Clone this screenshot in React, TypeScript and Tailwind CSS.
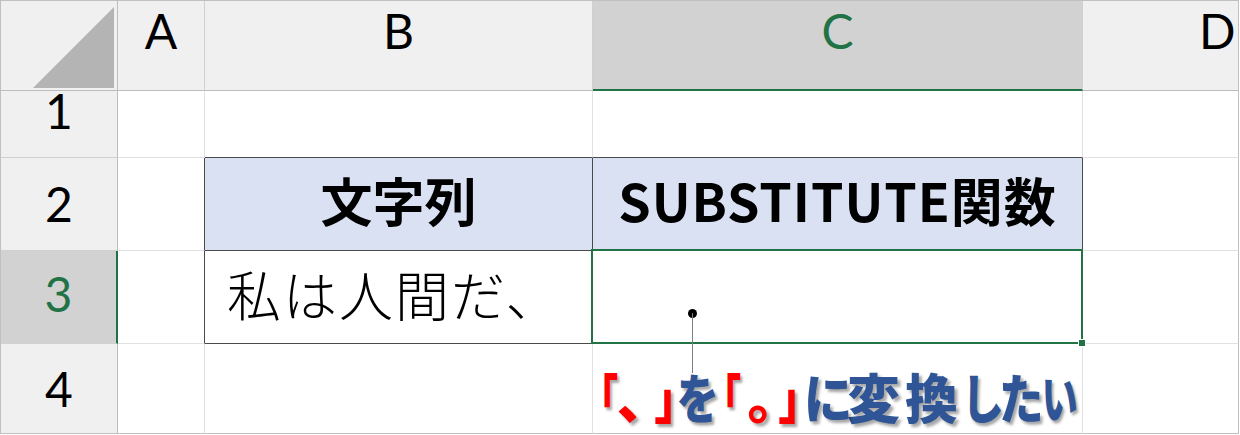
import React from "react";

const HDR_FONT = { fontFamily: 'Lato, "Noto Sans", sans-serif' };
const JP = { fontFamily: '"Noto Sans CJK JP", "Noto Sans", sans-serif' };

function ColHead({ label, selected }: { label: string; selected?: boolean }) {
  return (
    <div
      className={
        "flex justify-center items-start pt-[1px] border-r border-b border-r-[#d0d0d0] text-[48px] leading-[58px] " +
        (selected
          ? "bg-[#d2d2d2] text-[#217346] border-b-2 border-b-[#217346]"
          : "bg-[#f0f0f0] text-black border-b-[#bdbdbd]")
      }
      style={HDR_FONT}
    >
      {label}
    </div>
  );
}

function RowHead({ label, selected, pb, last }: { label: string; selected?: boolean; pb: string; last?: boolean }) {
  return (
    <div
      className={
        "flex justify-center items-end border-b text-[48px] leading-[58px] " +
        pb +
        " " +
        (last ? "border-b-[#c0c0c0] " : "border-b-[#d0d0d0] ") +
        (selected
          ? "bg-[#d2d2d2] text-[#217346] border-r-2 border-r-[#217346]"
          : "bg-[#f0f0f0] text-black border-r border-r-[#bdbdbd]")
      }
      style={HDR_FONT}
    >
      {label}
    </div>
  );
}

export default function App() {
  const cell = "border-r border-b border-r-[#e1e1e1] border-b-[#e1e1e1] bg-white";
  const cellD = "border-r border-b border-r-[#c0c0c0] border-b-[#e1e1e1] bg-white";
  const cell4 = "border-r border-b border-r-[#e1e1e1] border-b-[#c0c0c0] bg-white";
  const red = "inline-block origin-left text-[#ff0000]";
  const blue = "inline-block origin-left text-[#2f5597]";
  return (
    <div className="w-[1240px] h-[435px] bg-white overflow-hidden">
      <div className="relative w-[1239px]">
        <div className="grid grid-cols-[117px_87px_388px_490px_156px] grid-rows-[90px_67px_93px_93px_90px] border-l border-t border-[#c0c0c0]">
          {/* header row */}
          <div className="flex items-end justify-end pr-[3px] pb-[2px] bg-[#f0f0f0] border-r border-b border-r-[#bdbdbd] border-b-[#bdbdbd]">
            <svg width="81" height="81" viewBox="0 0 81 81">
              <polygon points="0,81 81,81 81,0" fill="#b4b4b4" />
            </svg>
          </div>
          <ColHead label="A" />
          <ColHead label="B" />
          <ColHead label="C" selected />
          <div
            className="flex items-start justify-start pt-[1px] pl-[116px] border-r border-b border-r-[#c0c0c0] border-b-[#bdbdbd] bg-[#f0f0f0] text-black text-[48px] leading-[58px]"
            style={HDR_FONT}
          >
            D
          </div>

          {/* row 1 */}
          <RowHead label="1" pb="pb-[17px]" />
          <div className={cell} />
          <div className="border-r border-b border-r-[#e1e1e1] border-b-[#4a4a4a] bg-white" />
          <div className="border-r border-b border-r-[#e1e1e1] border-b-[#4a4a4a] bg-white" />
          <div className={cellD} />

          {/* row 2 */}
          <RowHead label="2" pb="pb-[17px]" />
          <div className="border-r border-b border-r-[#4a4a4a] border-b-[#e1e1e1] bg-white" />
          <div
            className="flex items-center justify-center pb-[8px] border-r border-b border-[#4a4a4a] bg-[#d9e1f2] text-[52px] font-bold leading-none text-black"
            style={JP}
          >
            文字列
          </div>
          <div
            className="flex items-center justify-center pb-[8px] border-r border-b border-[#4a4a4a] bg-[#d9e1f2] text-[52px] font-bold leading-none text-black tracking-[1px]"
            style={JP}
          >
            SUBSTITUTE関数
          </div>
          <div className={cellD} />

          {/* row 3 */}
          <RowHead label="3" selected pb="pb-[20px]" />
          <div className="border-r border-b border-r-[#4a4a4a] border-b-[#e1e1e1] bg-white" />
          <div
            className="flex items-center justify-start pl-[22px] pb-[6px] border-r border-b border-[#4a4a4a] bg-white text-[54px] font-light leading-none tracking-[2px] text-black"
            style={JP}
          >
            私は人間だ、
          </div>
          <div className="relative border-r border-b border-[#4a4a4a] bg-white">
            <div className="absolute left-[-2px] top-[-2px] right-[-1px] bottom-[-1px] border-2 border-[#217346]">
              <div className="absolute right-[-5px] bottom-[-5px] w-[8px] h-[8px] bg-[#217346] border border-white" />
            </div>
          </div>
          <div className={cellD} />

          {/* row 4 */}
          <RowHead label="4" pb="pb-[15px]" last />
          <div className={cell4} />
          <div className={cell4} />
          <div className={cell4} />
          <div className="border-r border-b border-r-[#c0c0c0] border-b-[#c0c0c0] bg-white" />
        </div>

        {/* callout */}
        <div className="absolute left-[688px] top-[309px] w-[9px] h-[9px] rounded-full bg-black" />
        <div className="absolute left-[692px] top-[313px] w-px h-[60px] bg-[#7f7f7f]" />
        <div
          className="absolute left-[599px] top-[370px] flex whitespace-nowrap text-[53px] font-black leading-none [font-feature-settings:'palt'] [text-shadow:3px_3px_3px_rgba(0,0,0,0.35)]"
          style={JP}
        >
          <span className={red + " w-[18px] scale-x-[0.7]"}>「</span>
          <span className={red + " w-[38px]"}>、</span>
          <span className={red + " w-[22px] scale-x-[0.85]"}>」</span>
          <span className={blue + " w-[45px] scale-x-[0.8]"}>を</span>
          <span className={red + " w-[25px] scale-x-[0.7]"}>「</span>
          <span className={red + " w-[32px]"}>。</span>
          <span className={red + " w-[25px] scale-x-[0.85]"}>」</span>
          <span className={blue + " w-[43px] scale-x-[0.92]"}>に</span>
          <span className={blue + " w-[58px]"}>変</span>
          <span className={blue + " w-[59px]"}>換</span>
          <span className={blue + " w-[36px] scale-x-[0.8]"}>し</span>
          <span className={blue + " w-[42px] scale-x-[0.84]"}>た</span>
          <span className={blue + " w-[30px] scale-x-[0.68]"}>い</span>
        </div>
      </div>
    </div>
  );
}
